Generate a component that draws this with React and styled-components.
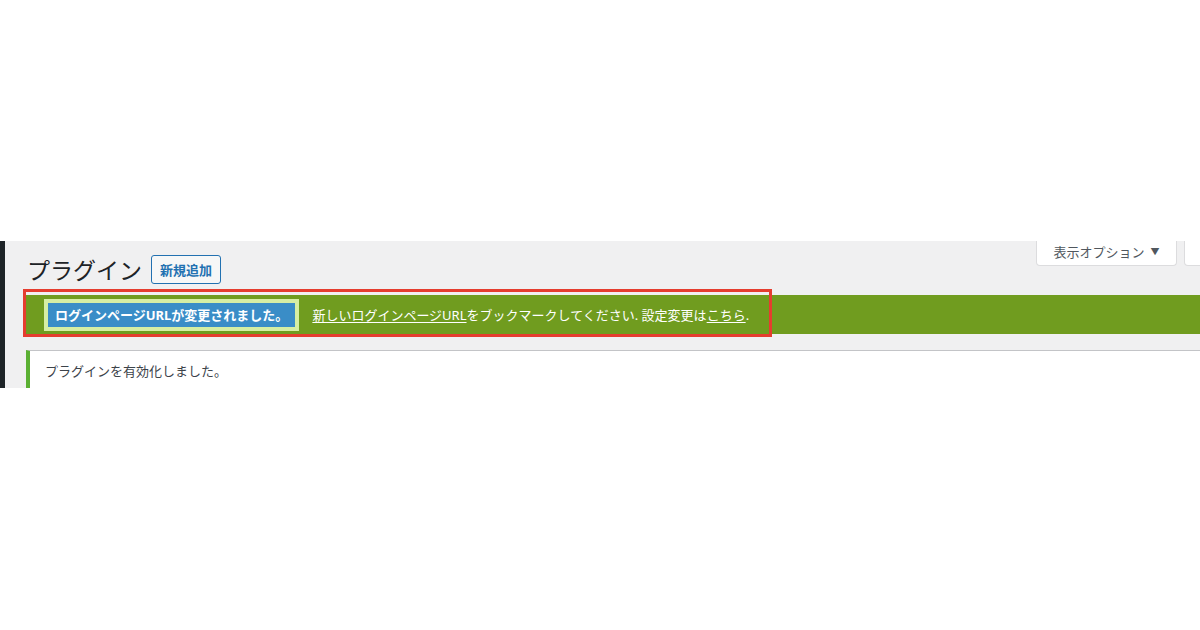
import React from "react";
import styled, { createGlobalStyle } from "styled-components";

const GlobalStyle = createGlobalStyle`
  html, body {
    margin: 0;
    padding: 0;
    background: #ffffff;
  }
  body {
    font-family: "Noto Sans", "Noto Sans CJK JP", sans-serif;
    font-size: 13px;
    color: #3c434a;
  }
`;

const App = () => {
  return (
    <Page>
      <GlobalStyle />
      <AdminStrip>
        <SideMenu />
        <Main>
          <Header>
            <TitleRow>
              <H1>プラグイン</H1>
              <AddButton>新規追加</AddButton>
            </TitleRow>
            <Tabs>
              <Tab width="141px">
                表示オプション <Caret>▼</Caret>
              </Tab>
              <Tab width="100px" />
            </Tabs>
          </Header>

          <UrlNotice>
            <Label>
              <LabelInner>ログインページURLが変更されました。</LabelInner>
            </Label>
            <Message>
              <Link>新しいログインページURL</Link>をブックマークしてください. 設定変更は<Link>こちら</Link>.
            </Message>
            <Highlight />
          </UrlNotice>

          <Notice>
            <p>プラグインを有効化しました。</p>
          </Notice>
        </Main>
      </AdminStrip>
    </Page>
  );
};

const Page = styled.div`
  width: 1200px;
  height: 630px;
  padding-top: 241px;
  box-sizing: border-box;
  background: #ffffff;
  overflow: hidden;
`;

const AdminStrip = styled.div`
  display: flex;
  height: 147px;
  background: #f0f0f1;
  overflow: hidden;
`;

const SideMenu = styled.div`
  width: 5px;
  flex-shrink: 0;
  background: #1d2327;
`;

const Main = styled.div`
  flex: 1;
  min-width: 0;
  padding-left: 21px;
`;

const Header = styled.div`
  display: flex;
  justify-content: space-between;
  align-items: flex-start;
`;

const TitleRow = styled.div`
  display: flex;
  align-items: center;
  gap: 9px;
  margin-top: 14px;
  padding-left: 1px;
`;

const H1 = styled.h1`
  margin: 0;
  font-family: "Noto Sans CJK JP", sans-serif;
  font-size: 23px;
  font-weight: 400;
  line-height: 29px;
  color: #1d2327;
`;

const AddButton = styled.button`
  height: 29px;
  padding: 0 8px;
  border: 1px solid #2271b1;
  border-radius: 3px;
  background: #f6f7f7;
  color: #2271b1;
  font-family: "Noto Sans CJK JP", sans-serif;
  font-size: 13px;
  font-weight: 700;
  line-height: 27px;
`;

const Tabs = styled.div`
  display: flex;
  gap: 7px;
  margin-right: -84px;
`;

const Tab = styled.div`
  width: ${(p) => p.width};
  height: 25px;
  box-sizing: border-box;
  display: flex;
  align-items: center;
  justify-content: center;
  gap: 6px;
  padding-bottom: 4px;
  background: #ffffff;
  border: 1px solid #dcdcde;
  border-top: none;
  border-radius: 0 0 4px 4px;
  color: #50575e;
  font-family: "Noto Sans CJK JP", sans-serif;
  font-size: 13px;
`;

const Caret = styled.span`
  font-size: 9px;
  color: #50575e;
`;

const UrlNotice = styled.div`
  position: relative;
  display: flex;
  align-items: center;
  height: 39px;
  margin-top: 11px;
  padding-left: 18px;
  background: #709c1f;
  color: #ffffff;
  font-family: "Noto Sans", "Noto Sans CJK JP", sans-serif;
`;

const Label = styled.div`
  border: 4px solid #d6eea4;
  background: #3a8dc7;
`;

const LabelInner = styled.div`
  padding: 0 7px;
  font-size: 13px;
  font-weight: 700;
  line-height: 24px;
  color: #ffffff;
  white-space: nowrap;
`;

const Message = styled.div`
  margin-left: 13px;
  font-size: 13px;
  white-space: nowrap;
`;

const Link = styled.span`
  text-decoration: underline;
  text-underline-offset: 2px;
`;

const Highlight = styled.div`
  position: absolute;
  left: -3px;
  top: -6px;
  width: 749px;
  height: 48px;
  box-sizing: border-box;
  border: 3px solid #e53d2f;
  pointer-events: none;
`;

const Notice = styled.div`
  margin-top: 16px;
  height: 60px;
  background: #ffffff;
  border-top: 1px solid #c3c4c7;
  border-left: 4px solid #5bb033;
  padding: 10px 15px;
  box-sizing: border-box;

  p {
    margin: 0;
    font-family: "Noto Sans CJK JP", sans-serif;
    font-size: 13px;
    line-height: 20px;
    color: #3c434a;
  }
`;

export default App;
